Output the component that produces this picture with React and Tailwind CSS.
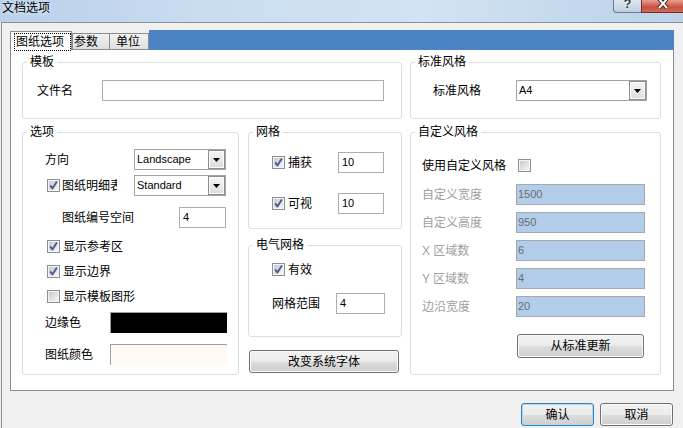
import React from "react";

const Check = ({ checked }) => (
  <svg width="13" height="13" viewBox="0 0 13 13" className="block shrink-0">
    <defs>
      <linearGradient id="cbg" x1="0" y1="0" x2="1" y2="1">
        <stop offset="0" stopColor="#c6cad0" />
        <stop offset="1" stopColor="#f6f6f6" />
      </linearGradient>
    </defs>
    <rect x="0.5" y="0.5" width="12" height="12" fill="#f4f4f4" stroke="#8e8f8f" />
    <rect x="2" y="2" width="9" height="9" fill="url(#cbg)" />
    {checked && (
      <path d="M3.2 6.4 L5.4 9.4 L9.9 2.6" fill="none" stroke="#4a5a90" strokeWidth="1.9" strokeLinejoin="round" />
    )}
  </svg>
);

const Combo = ({ value, className }) => (
  <div className={"flex h-[21px] border border-[#a3a3a3] bg-white " + className}>
    <span className="flex-1 pl-[2px] text-[11px] leading-[19px] whitespace-nowrap overflow-hidden">{value}</span>
    <span className="flex h-full w-[17px] items-center justify-center border border-[#8e8e8e] bg-[linear-gradient(#f6f6f6,#dcdcdc)] shadow-[inset_0_0_0_1px_#fbfbfb]">
      <svg width="7" height="4" viewBox="0 0 7 4" className="block">
        <path d="M0 0H7L3.5 4Z" fill="#000" />
      </svg>
    </span>
  </div>
);

const Field = ({ value, className }) => (
  <div className={"h-[21px] border border-[#abadb3] bg-white pl-[3px] text-[11px] leading-[19px] " + className}>{value}</div>
);

const Disabled = ({ value }) => (
  <div className="h-[21px] w-[129px] border border-[#a5a9ae] bg-[#b1cdea] pl-[1px] text-[11px] leading-[19px] text-[#6d6d6d]">{value}</div>
);

const Group = ({ title, className, children }) => (
  <fieldset className={"rounded-[3px] border border-[#d5dfe5] " + className}>
    <legend className="ml-[4px] px-[3px] leading-[14px]">{title}</legend>
    {children}
  </fieldset>
);

const Btn = ({ children, className, focus }) => (
  <div
    className={
      "flex items-center justify-center rounded-[3px] border bg-[linear-gradient(#f2f2f2_0%,#ebebeb_50%,#dddddd_51%,#cfcfcf_100%)] " +
      (focus
        ? "border-[#3c7fb1] shadow-[inset_0_0_0_1px_#a6daf6] "
        : "border-[#707070] shadow-[inset_0_0_0_1px_#fbfbfb] ") +
      className
    }
  >
    {children}
  </div>
);

const CheckRow = ({ checked, label, className }) => (
  <div className={"flex h-[13px] items-center " + className}>
    <Check checked={checked} />
    <span className="ml-[3px] whitespace-nowrap">{label}</span>
  </div>
);

export default function App() {
  return (
    <div className="flex h-[428px] w-[683px] flex-col overflow-hidden bg-[#f0f0f0] font-['Liberation_Sans','Noto_Sans_CJK_SC',sans-serif] text-[12px] leading-[14px] text-black">
      {/* title bar */}
      <div className="flex h-[22px] shrink-0 bg-[linear-gradient(90deg,#b9d1ea_0%,#c9dcf0_30%,#d3e3f3_62%,#c6daee_80%,#bcd3eb_100%)]">
        <div className="flex-1 pl-[2px] pt-[1px] [text-shadow:0_0_5px_#fff]">文档选项</div>
        <div className="flex h-[13px] w-[28px] items-start justify-center overflow-hidden rounded-bl-[4px] border-b border-l border-[#6b7a90] bg-[linear-gradient(#dfe7f1,#c0cedd)]">
          <span className="-mt-[3px] text-[13px] font-bold leading-[14px] text-[#3a3f46] [text-shadow:0_0_2px_#fff]">?</span>
        </div>
        <div className="flex h-[13px] w-[42px] items-start justify-center overflow-hidden border-b border-l border-[#7a2a22] bg-[linear-gradient(#e8a093,#c7513f_60%,#d06a58)]">
          <svg width="12" height="10" viewBox="0 0 12 10" className="block">
            <path d="M2 -1 L10 8 M10 -1 L2 8" stroke="#3d2020" strokeWidth="4" />
            <path d="M2 -1 L10 8 M10 -1 L2 8" stroke="#fff" strokeWidth="2" />
          </svg>
        </div>
      </div>

      {/* body */}
      <div className="ml-px flex flex-1 flex-col border-l border-t border-[#8c9197]">
        <div className="ml-[8px] mt-[7px] w-[664px]">
          {/* tabs */}
          <div className="flex h-[20px]">
            <div className="mt-px h-[19px] w-[62px] border-l border-r border-t border-[#898c95] bg-white">
              <div className="ml-[3px] mt-px flex h-[18px] w-[57px] items-center border border-dotted border-black pl-px">图纸选项</div>
            </div>
            <div className="mt-[3px] flex h-[17px] w-[38px] items-center border border-[#898c95] bg-[linear-gradient(#f2f2f2,#e0e0e0)] pl-px">参数</div>
            <div className="mt-[3px] flex h-[17px] w-[39px] items-center border border-l-0 border-[#898c95] bg-[linear-gradient(#f2f2f2,#e0e0e0)] pl-[6px]">单位</div>
            <div className="h-[20px] flex-1 bg-[#4a84c5]" />
          </div>

          {/* panel */}
          <div className="h-[341px] border-b border-l border-r border-[#898c95] bg-white pl-[11px] pt-[5px]">
            <div className="flex h-[64px]">
              <Group title="模板" className="h-[64px] w-[380px]">
                <div className="mt-[11px] flex items-center pl-[14px]">
                  <span className="w-[65px]">文件名</span>
                  <Field value="" className="w-[282px]" />
                </div>
              </Group>
              <Group title="标准风格" className="ml-[8px] h-[64px] w-[251px]">
                <div className="mt-[11px] flex items-center pl-[22px]">
                  <span className="w-[83px]">标准风格</span>
                  <Combo value="A4" className="w-[131px]" />
                </div>
              </Group>
            </div>

            <div className="mt-[6px] flex h-[250px]">
              <Group title="选项" className="h-[250px] w-[217px]">
                <div className="mt-[10px] flex items-center pl-[22px]">
                  <span className="w-[89px]">方向</span>
                  <Combo value="Landscape" className="w-[92px]" />
                </div>
                <div className="mt-[5px] flex h-[21px] items-center pl-[24px]">
                  <Check checked />
                  <span className="ml-[2px] w-[55px] overflow-hidden whitespace-nowrap">图纸明细表</span>
                  <Combo value="Standard" className="ml-[17px] w-[92px]" />
                </div>
                <div className="mt-[11px] flex items-center pl-[39px]">
                  <span className="w-[117px]">图纸编号空间</span>
                  <Field value="4" className="w-[47px]" />
                </div>
                <CheckRow checked label="显示参考区" className="mt-[12px] pl-[24px]" />
                <CheckRow checked label="显示边界" className="mt-[12px] pl-[24px]" />
                <CheckRow label="显示模板图形" className="mt-[12px] pl-[24px]" />
                <div className="mt-[9px] flex items-center pl-[22px]">
                  <span className="w-[65px]">边缘色</span>
                  <div className="h-[21px] w-[117px] border-l border-t border-[#a0a0a0] bg-black" />
                </div>
                <div className="mt-[11px] flex items-center pl-[22px]">
                  <span className="w-[65px]">图纸颜色</span>
                  <div className="h-[21px] w-[117px] border-l border-t border-[#a0a0a0] bg-[#fffaf6]" />
                </div>
              </Group>

              <div className="ml-[9px] flex w-[154px] flex-col">
                <Group title="网格" className="h-[104px] w-[154px]">
                  <div className="mt-[13px] flex h-[21px] items-center pl-[23px]">
                    <Check checked />
                    <span className="ml-[3px] w-[50px]">捕获</span>
                    <Field value="10" className="w-[46px]" />
                  </div>
                  <div className="mt-[20px] flex h-[21px] items-center pl-[23px]">
                    <Check checked />
                    <span className="ml-[3px] w-[50px]">可视</span>
                    <Field value="10" className="w-[46px]" />
                  </div>
                </Group>
                <Group title="电气网格" className="mt-[9px] h-[99px] w-[154px]">
                  <CheckRow checked label="有效" className="mt-[11px] pl-[23px]" />
                  <div className="mt-[17px] flex items-center pl-[23px]">
                    <span className="w-[64px]">网格范围</span>
                    <Field value="4" className="w-[49px]" />
                  </div>
                </Group>
                <Btn className="ml-px mt-[13px] h-[23px] w-[150px]">改变系统字体</Btn>
              </div>

              <Group title="自定义风格" className="ml-[8px] h-[250px] w-[251px]">
                <div className="mt-[20px] flex h-[13px] items-center pl-[11px]">
                  <span className="w-[96px]">使用自定义风格</span>
                  <Check />
                </div>
                {[
                  ["自定义宽度", "1500", "mt-[12px]"],
                  ["自定义高度", "950", "mt-[7px]"],
                  ["X 区域数", "6", "mt-[7px]"],
                  ["Y 区域数", "4", "mt-[7px]"],
                  ["边沿宽度", "20", "mt-[7px]"],
                ].map(([l, v, m]) => (
                  <div key={l} className={"flex items-center pl-[11px] " + m}>
                    <span className="w-[94px] text-[#a0a0a0]">{l}</span>
                    <Disabled value={v} />
                  </div>
                ))}
                <Btn className="ml-[106px] mt-[17px] h-[24px] w-[127px]">从标准更新</Btn>
              </Group>
            </div>
          </div>
        </div>

        {/* bottom buttons */}
        <div className="mt-[12px] flex justify-end gap-[6px] pr-[10px]">
          <Btn focus className="h-[23px] w-[73px]">确认</Btn>
          <Btn className="h-[23px] w-[73px]">取消</Btn>
        </div>
      </div>
    </div>
  );
}
